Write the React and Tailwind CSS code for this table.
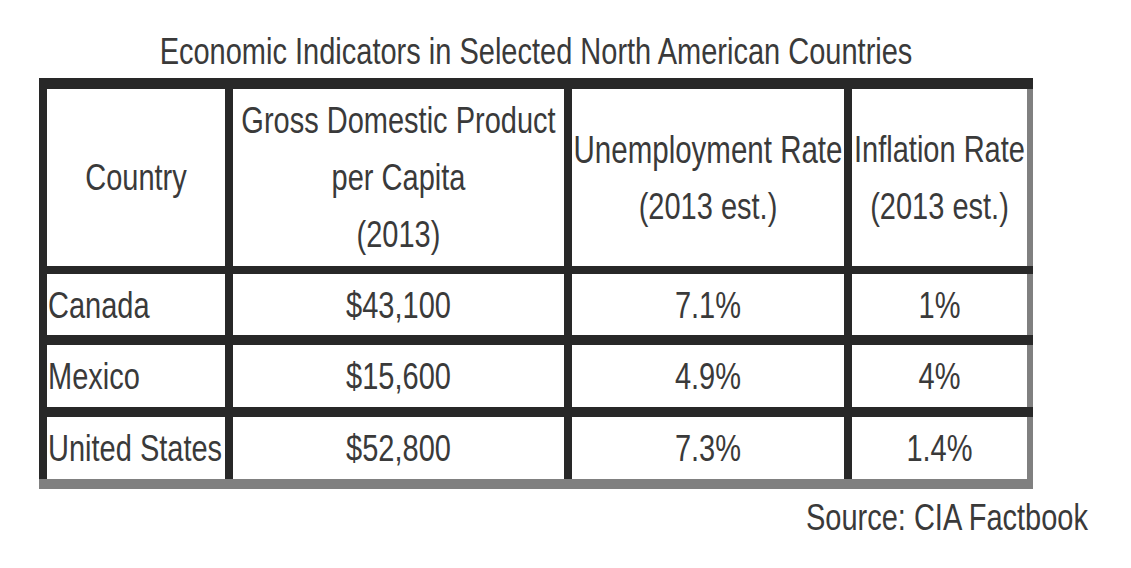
import React from "react";

const T = ({ children, className = "" }) => (
  <span className={`inline-block scale-y-[1.3] whitespace-nowrap ${className}`}>{children}</span>
);

const rows = [
  ["Canada", "$43,100", "7.1%", "1%"],
  ["Mexico", "$15,600", "4.9%", "4%"],
  ["United States", "$52,800", "7.3%", "1.4%"],
];

export default function App() {
  return (
    <div
      className="w-[1131px] h-[568px] bg-white text-[#3a3a3a] text-[29px]"
      style={{ fontFamily: '"Liberation Sans", Arial, sans-serif' }}
    >
      <div className="pl-[39px] pt-[31px]">
        <div className="w-[994px] h-[40px] leading-[40px] text-center">
          <T>Economic Indicators in Selected North American Countries</T>
        </div>

        <div className="mt-[7px] w-[994px] flex flex-col bg-[#282828] pt-[11px]">
          {/* header */}
          <div className="flex">
            <div className="w-[8px]" />
            <div className="flex gap-[8px] leading-[57px]">
              <div className="w-[178px] h-[177px] bg-white flex items-center justify-center">
                <T>Country</T>
              </div>
              <div className="w-[331px] h-[177px] bg-white flex flex-col items-center justify-center">
                <T>Gross Domestic Product</T>
                <T>per Capita</T>
                <T>(2013)</T>
              </div>
              <div className="w-[272px] h-[177px] bg-white flex flex-col items-center justify-center">
                <T className="text-[29.5px]">Unemployment Rate</T>
                <T>(2013 est.)</T>
              </div>
              <div className="w-[175px] h-[177px] bg-white flex flex-col items-center justify-center">
                <T>Inflation Rate</T>
                <T>(2013 est.)</T>
              </div>
            </div>
            <div className="w-[6px] bg-[#808080]" />
          </div>

          {rows.map((r, i) => (
            <div key={r[0]} className={`flex ${i === 0 ? "mt-[8px]" : "mt-[10px]"}`}>
              <div className="w-[8px]" />
              <div className={`flex gap-[8px] leading-[40px] ${i === 0 ? "h-[61px]" : "h-[62px]"}`}>
                <div className="w-[178px] bg-white flex items-center pl-[1px]">
                  <T>{r[0]}</T>
                </div>
                <div className="w-[331px] bg-white flex items-center justify-center">
                  <T>{r[1]}</T>
                </div>
                <div className="w-[272px] bg-white flex items-center justify-center">
                  <T>{r[2]}</T>
                </div>
                <div className="w-[175px] bg-white flex items-center justify-center">
                  <T>{r[3]}</T>
                </div>
              </div>
              <div className="w-[6px] bg-[#808080]" />
            </div>
          ))}

          <div className="h-[10px] bg-[#808080]" />
        </div>

        <div className="mt-[8px] w-[1049px] h-[40px] leading-[40px] text-right">
          <T>Source: CIA Factbook</T>
        </div>
      </div>
    </div>
  );
}
